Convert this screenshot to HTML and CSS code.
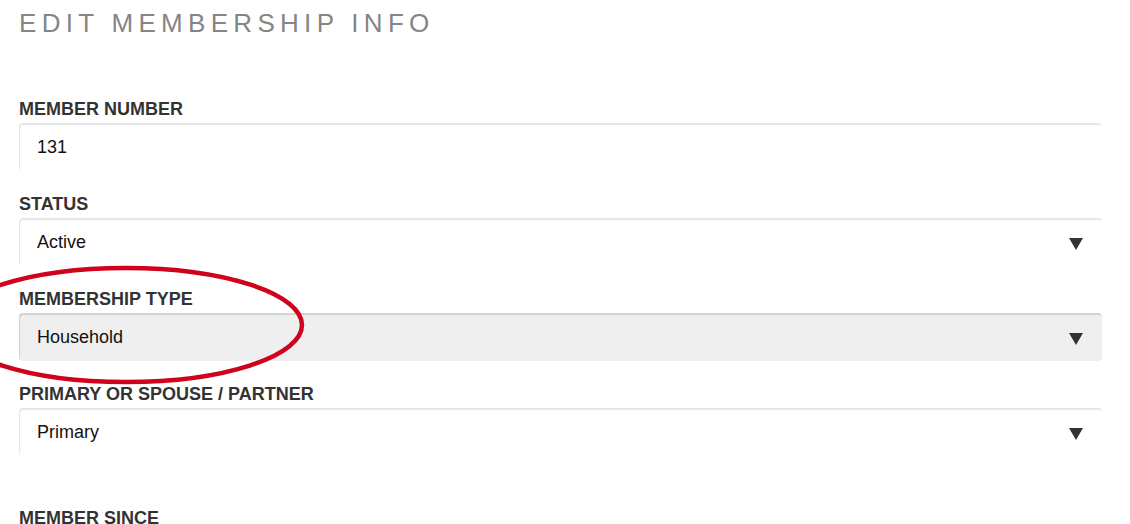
FILE: index.html
```html
<!DOCTYPE html>
<html>
<head>
<meta charset="utf-8">
<link rel="stylesheet" href="styles.css">
</head>
<body>
<div class="page">
  <h1 class="title">EDIT MEMBERSHIP INFO</h1>
  <form class="form">
    <div class="field">
      <label class="label">MEMBER NUMBER</label>
      <div class="input"><span class="value">131</span></div>
    </div>
    <div class="field">
      <label class="label">STATUS</label>
      <div class="input select"><span class="value">Active</span><svg class="caret" viewBox="0 0 14 12" width="14" height="12"><polygon points="0,0 14,0 7,12" /></svg></div>
    </div>
    <div class="field">
      <label class="label">MEMBERSHIP TYPE</label>
      <div class="input select disabled"><span class="value">Household</span><svg class="caret" viewBox="0 0 14 12" width="14" height="12"><polygon points="0,0 14,0 7,12" /></svg></div>
    </div>
    <div class="field">
      <label class="label">PRIMARY OR SPOUSE / PARTNER</label>
      <div class="input select"><span class="value">Primary</span><svg class="caret" viewBox="0 0 14 12" width="14" height="12"><polygon points="0,0 14,0 7,12" /></svg></div>
    </div>
    <div class="field spaced">
      <label class="label">MEMBER SINCE</label>
    </div>
  </form>
  <svg class="annotation" width="320" height="400" viewBox="0 0 320 400">
    <ellipse cx="126" cy="325" rx="176" ry="57" fill="none" stroke="#d0021b" stroke-width="4.5" />
  </svg>
</div>
</body>
</html>
```
FILE: styles.css
```css
html, body {
  margin: 0;
  padding: 0;
  background: #ffffff;
  overflow: hidden;
}

.page {
  position: relative;
  padding: 8px 28px 0 19px;
  font-family: "Liberation Sans", Arial, Helvetica, sans-serif;
}

.title {
  margin: 0;
  font-size: 26px;
  line-height: 30px;
  font-weight: normal;
  letter-spacing: 5.3px;
  color: #858585;
}

.form {
  margin-top: 60px;
  display: flex;
  flex-direction: column;
  gap: 22px;
}

.field {
  display: flex;
  flex-direction: column;
  gap: 3px;
}

.field.spaced {
  margin-top: 29px;
}

.label {
  font-size: 18px;
  line-height: 22px;
  font-weight: bold;
  color: #333333;
}

.input {
  height: 48px;
  box-sizing: border-box;
  border-radius: 4px;
  background: #ffffff;
  box-shadow: inset 1px 2px 1px rgba(0, 0, 0, 0.1);
  display: flex;
  align-items: center;
  justify-content: space-between;
  padding: 1px 19px 0 18px;
}

.input.disabled {
  background: #efefef;
  box-shadow: inset 1px 2px 1px rgba(0, 0, 0, 0.12);
}

.value {
  font-size: 18px;
  color: #111111;
}

.caret {
  fill: #333333;
  display: block;
  margin-top: 2px;
}

.annotation {
  position: absolute;
  left: 0;
  top: 0;
  pointer-events: none;
}
```
